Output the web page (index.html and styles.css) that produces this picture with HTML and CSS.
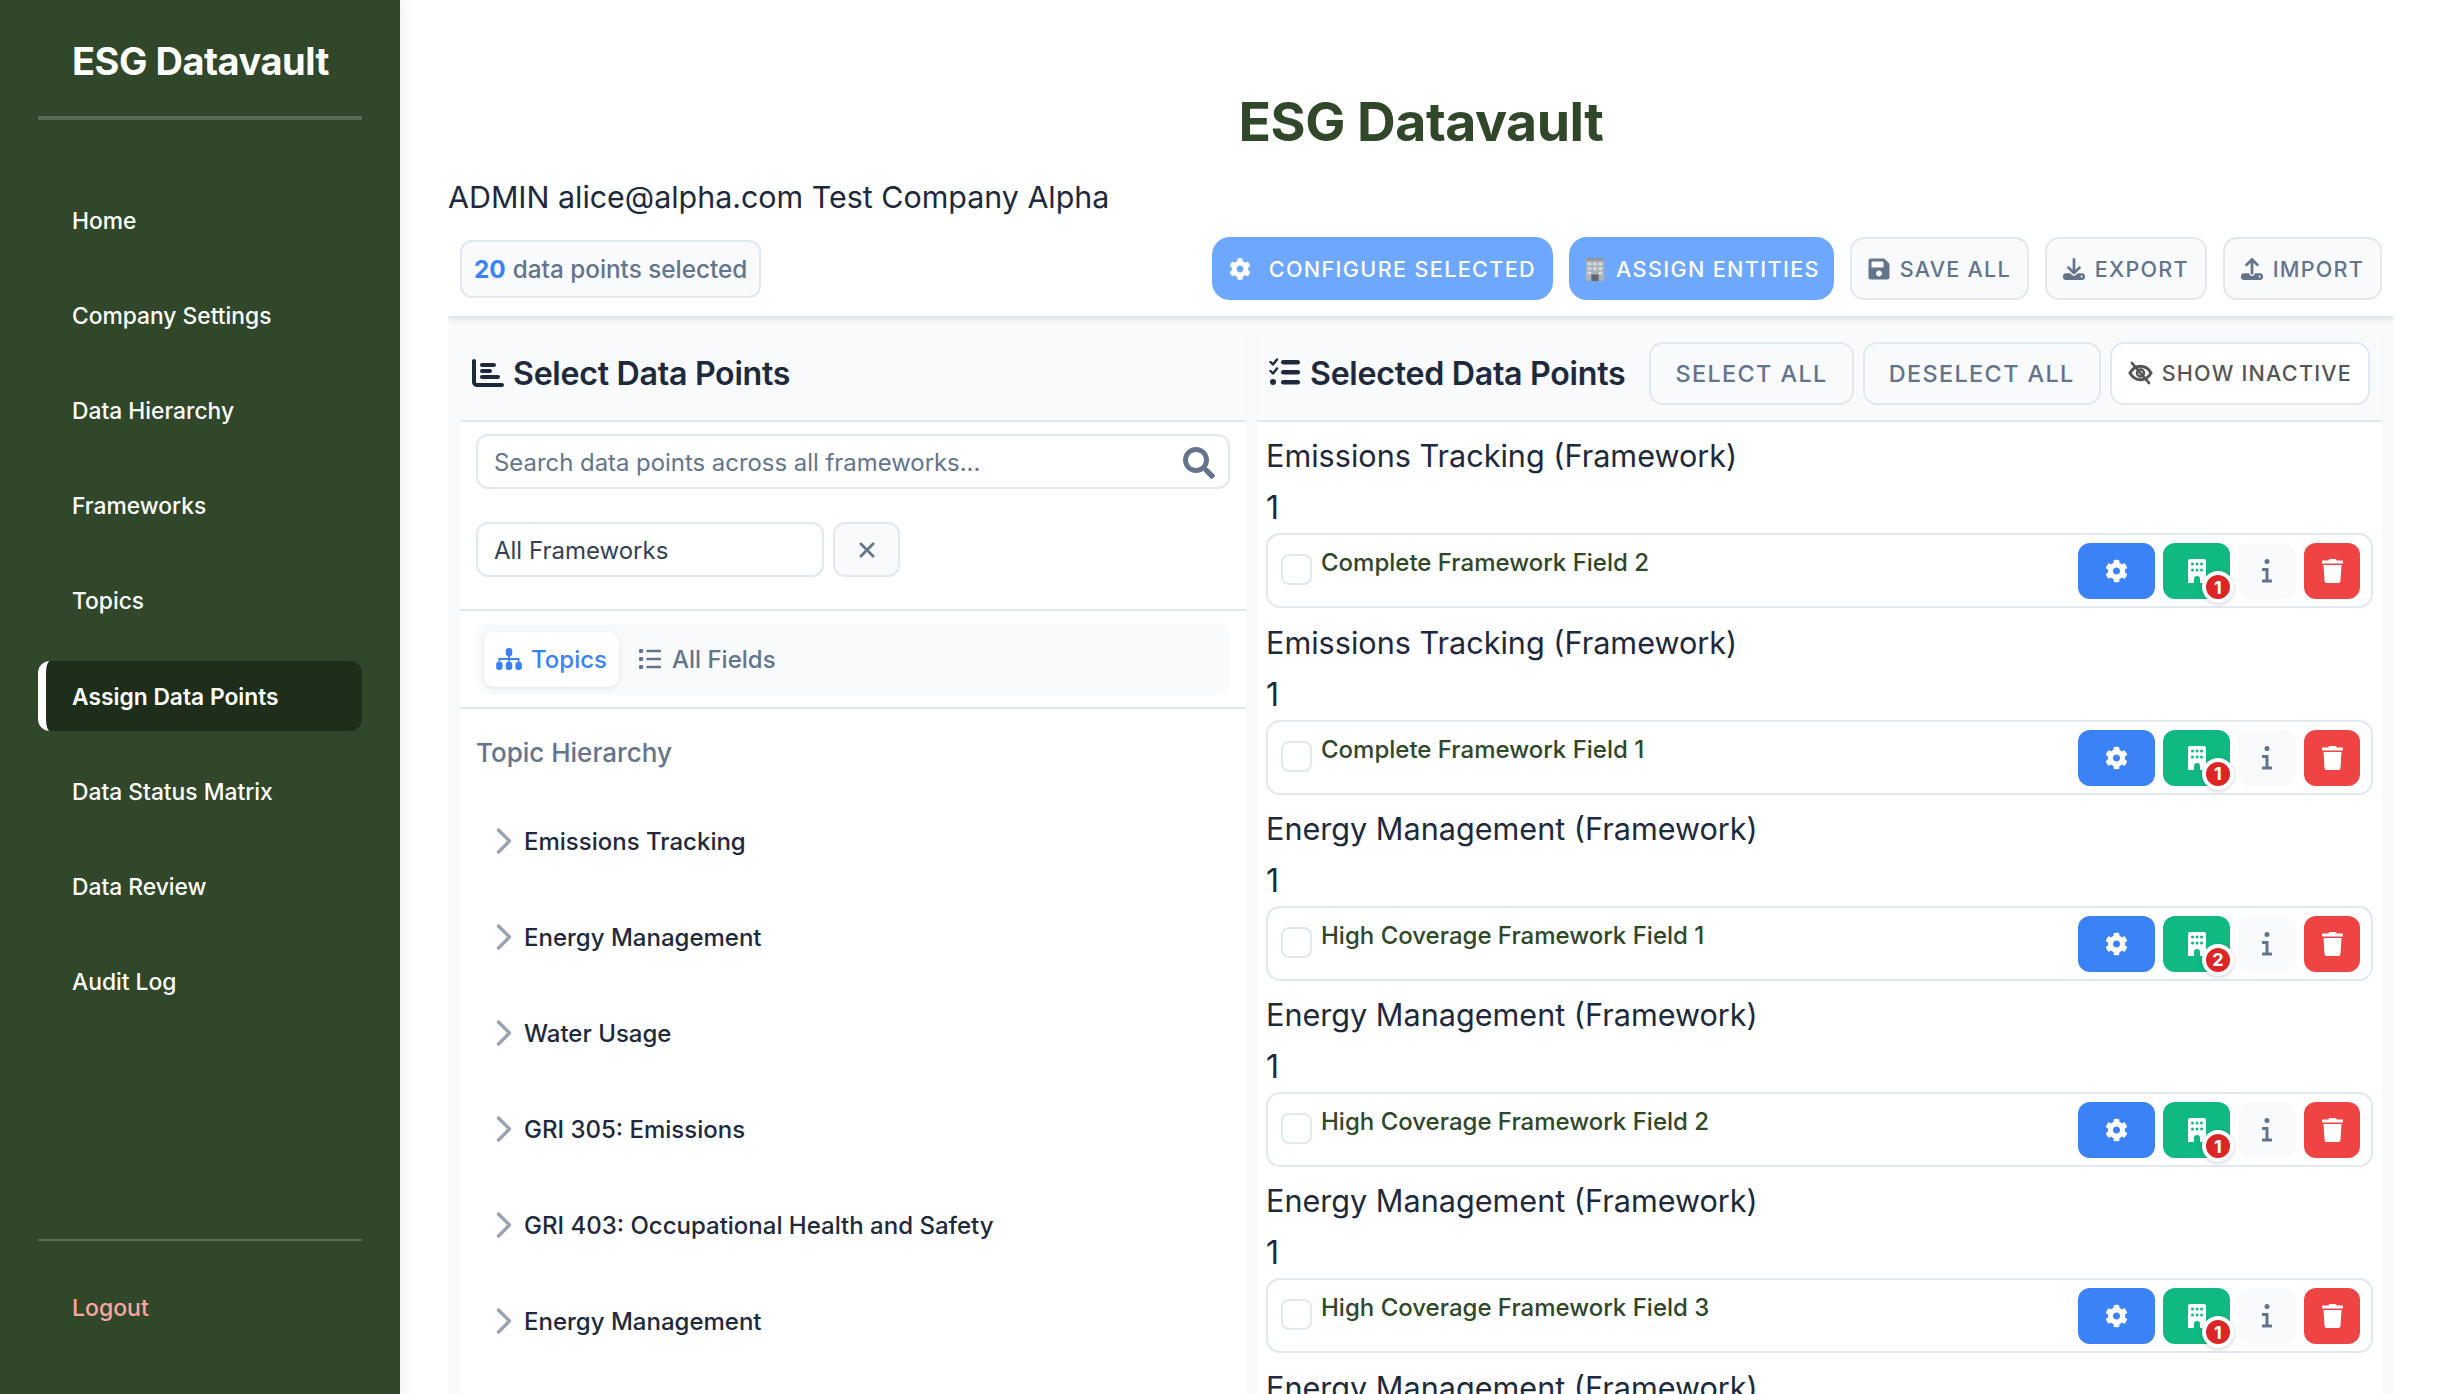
FILE: index.html
```html
<!DOCTYPE html>
<html>
<head>
    <title>ESG Datavault</title>
    <link rel="stylesheet" href="styles.css">
</head>
<body>
    <svg class="defs" width="0" height="0">
        <symbol id="i-cog" viewBox="0 0 512 512"><path d="M487.4 315.7l-42.6-24.6c4.3-23.2 4.3-47 0-70.2l42.6-24.6c4.9-2.8 7.1-8.6 5.5-14-11.1-35.6-30-67.8-54.7-94.6-3.8-4.1-10-5.1-14.8-2.3L380.8 110c-17.9-15.4-38.5-27.3-60.8-35.1V25.8c0-5.6-3.9-10.5-9.4-11.7-36.7-8.2-74.3-7.8-109.2 0-5.5 1.2-9.4 6.1-9.4 11.7V75c-22.2 7.9-42.8 19.8-60.8 35.1L88.7 85.5c-4.9-2.8-11-1.9-14.8 2.3-24.7 26.7-43.6 58.9-54.7 94.6-1.7 5.4.6 11.2 5.5 14L67.3 221c-4.3 23.2-4.3 47 0 70.2l-42.6 24.6c-4.9 2.8-7.1 8.6-5.5 14 11.1 35.6 30 67.8 54.7 94.6 3.8 4.1 10 5.1 14.8 2.3l42.6-24.6c17.9 15.4 38.5 27.3 60.8 35.1v49.2c0 5.6 3.9 10.5 9.4 11.7 36.7 8.2 74.3 7.8 109.2 0 5.5-1.2 9.4-6.1 9.4-11.7v-49.2c22.2-7.9 42.8-19.8 60.8-35.1l42.6 24.6c4.9 2.8 11 1.9 14.8-2.3 24.7-26.7 43.6-58.9 54.7-94.6 1.5-5.5-.7-11.3-5.6-14.1zM256 336c-44.1 0-80-35.9-80-80s35.9-80 80-80 80 35.9 80 80-35.9 80-80 80z"/></symbol>
        <symbol id="i-trash" viewBox="0 0 448 512"><path d="M432 32H312l-9.4-18.7A24 24 0 0 0 281.1 0H166.8a23.72 23.72 0 0 0-21.4 13.3L136 32H16A16 16 0 0 0 0 48v32a16 16 0 0 0 16 16h416a16 16 0 0 0 16-16V48a16 16 0 0 0-16-16zM53.2 467a48 48 0 0 0 47.9 45h245.8a48 48 0 0 0 47.9-45L416 128H32z"/></symbol>
        <symbol id="i-search" viewBox="0 0 512 512"><path d="M505 442.7L405.3 343c-4.5-4.5-10.6-7-17-7H372c27.6-35.3 44-79.7 44-128C416 93.1 322.9 0 208 0S0 93.1 0 208s93.1 208 208 208c48.3 0 92.7-16.4 128-44v16.3c0 6.4 2.5 12.5 7 17l99.7 99.7c9.4 9.4 24.6 9.4 33.9 0l28.3-28.3c9.4-9.4 9.4-24.6.1-34zM208 336c-70.7 0-128-57.2-128-128 0-70.7 57.2-128 128-128 70.7 0 128 57.2 128 128 0 70.7-57.2 128-128 128z"/></symbol>
        <symbol id="i-save" viewBox="0 0 448 512"><path d="M433.941 129.941l-83.882-83.882A48 48 0 0 0 316.118 32H48C21.49 32 0 53.49 0 80v352c0 26.51 21.49 48 48 48h352c26.51 0 48-21.49 48-48V163.882a48 48 0 0 0-14.059-33.941zM224 416c-35.346 0-64-28.654-64-64 0-35.346 28.654-64 64-64s64 28.654 64 64c0 35.346-28.654 64-64 64zm96-304.52V212c0 6.627-5.373 12-12 12H76c-6.627 0-12-5.373-12-12V108c0-6.627 5.373-12 12-12h228.52c3.183 0 6.235 1.264 8.485 3.515l3.48 3.48A11.996 11.996 0 0 1 320 111.48z"/></symbol>
        <symbol id="i-download" viewBox="0 0 512 512"><path d="M288 32c0-17.7-14.3-32-32-32s-32 14.3-32 32V274.7l-73.4-73.4c-12.5-12.5-32.8-12.5-45.3 0s-12.5 32.8 0 45.3l128 128c12.5 12.5 32.8 12.5 45.3 0l128-128c12.5-12.5 12.5-32.8 0-45.3s-32.8-12.5-45.3 0L288 274.7V32zM64 352c-35.3 0-64 28.7-64 64v32c0 35.3 28.7 64 64 64H448c35.3 0 64-28.7 64-64V416c0-35.3-28.7-64-64-64H346.5l-45.3 45.3c-25 25-65.5 25-90.5 0L165.5 352H64zm368 56a24 24 0 1 1 0 48 24 24 0 1 1 0-48z"/></symbol>
        <symbol id="i-upload" viewBox="0 0 512 512"><path d="M288 109.3V352c0 17.7-14.3 32-32 32s-32-14.3-32-32V109.3l-73.4 73.4c-12.5 12.5-32.8 12.5-45.3 0s-12.5-32.8 0-45.3l128-128c12.5-12.5 32.8-12.5 45.3 0l128 128c12.5 12.5 12.5 32.8 0 45.3s-32.8 12.5-45.3 0L288 109.3zM64 352H192c0 35.3 28.7 64 64 64s64-28.7 64-64H448c35.3 0 64 28.7 64 64v32c0 35.3-28.7 64-64 64H64c-35.3 0-64-28.7-64-64V416c0-35.3 28.7-64 64-64zM432 456a24 24 0 1 0 0-48 24 24 0 1 0 0 48z"/></symbol>
        <symbol id="i-chart" viewBox="0 0 512 512"><path d="M32 32c17.7 0 32 14.3 32 32V400c0 8.8 7.2 16 16 16H480c17.7 0 32 14.3 32 32s-14.3 32-32 32H80c-44.2 0-80-35.8-80-80V64C0 46.3 14.3 32 32 32zm96 96c0-17.7 14.3-32 32-32l192 0c17.7 0 32 14.3 32 32s-14.3 32-32 32l-192 0c-17.7 0-32-14.3-32-32zm32 64H288c17.7 0 32 14.3 32 32s-14.3 32-32 32H160c-17.7 0-32-14.3-32-32s14.3-32 32-32zm0 96H416c17.7 0 32 14.3 32 32s-14.3 32-32 32H160c-17.7 0-32-14.3-32-32s14.3-32 32-32z"/></symbol>
        <symbol id="i-checks" viewBox="0 0 32 32"><path d="M1.500 5l2.500 2.500L8 2.500M1.500 14l2.500 2.500L8 11.500" fill="none" stroke="currentColor" stroke-width="2.400" stroke-linecap="round" stroke-linejoin="round"/><circle cx="4" cy="25" r="3"/><rect x="12" y="3" width="19" height="4.600" rx="2.300"/><rect x="12" y="13" width="19" height="4.600" rx="2.300"/><rect x="12" y="23" width="19" height="4.600" rx="2.300"/></symbol>
        <symbol id="i-sitemap" viewBox="0 0 28 24"><rect x="10.500" y="0" width="7" height="9" rx="3"/><rect x="0" y="15" width="7" height="9" rx="3"/><rect x="10.500" y="15" width="7" height="9" rx="3"/><rect x="21" y="15" width="7" height="9" rx="3"/><path d="M3.500 15v-3h21v3M14 8v7" fill="none" stroke="currentColor" stroke-width="2"/></symbol>
        <symbol id="i-list" viewBox="0 0 24 24"><rect x="0" y="1" width="4.500" height="4.500" rx="1.200"/><rect x="0" y="9.700" width="4.500" height="4.500" rx="1.200"/><rect x="0" y="18.500" width="4.500" height="4.500" rx="1.200"/><rect x="8" y="2" width="16" height="2.600" rx="1"/><rect x="8" y="10.700" width="16" height="2.600" rx="1"/><rect x="8" y="19.400" width="16" height="2.600" rx="1"/></symbol>
        <symbol id="i-eye" viewBox="0 0 26 24"><path d="M2 12c2.600-4.500 6.400-7 11-7s8.400 2.500 11 7c-2.600 4.500-6.400 7-11 7s-8.400-2.500-11-7z" fill="none" stroke="currentColor" stroke-width="3"/><circle cx="13" cy="12" r="3.600" fill="none" stroke="currentColor" stroke-width="2.600"/><path d="M4 1.500l18 21" stroke="currentColor" stroke-width="2.600" stroke-linecap="round"/></symbol>
        <symbol id="i-chevron" viewBox="0 0 16 26"><path d="M2.500 2l11 11-11 11" fill="none" stroke="currentColor" stroke-width="3.400" stroke-linecap="round" stroke-linejoin="round"/></symbol>
        <symbol id="i-xmark" viewBox="0 0 16 16"><path d="M2.500 2.500l11 11M13.500 2.500l-11 11" fill="none" stroke="currentColor" stroke-width="2.400" stroke-linecap="round"/></symbol>
        <symbol id="i-building" viewBox="0 0 18 24"><path d="M2 0h14a2 2 0 0 1 2 2v22h-6v-4a3 3 0 0 0-6 0v4H0V2a2 2 0 0 1 2-2z"/><g fill="#10b981"><circle cx="4.500" cy="5" r="1.500"/><circle cx="9" cy="5" r="1.500"/><circle cx="13.500" cy="5" r="1.500"/><circle cx="4.500" cy="11" r="1.500"/><circle cx="9" cy="11" r="1.500"/><circle cx="13.500" cy="11" r="1.500"/></g></symbol>
        <symbol id="i-info" viewBox="0 0 10 24"><circle cx="5" cy="2.500" r="2.500"/><path d="M1 9h5.500v11.500H9a1.500 1.500 0 0 1 0 3H1a1.500 1.500 0 0 1 0-3h2.500V12H1a1.500 1.500 0 0 1 0-3z"/></symbol>
        <symbol id="i-office" viewBox="0 0 24 26"><rect x="2" y="1" width="20" height="25" fill="#a9b3b8"/><rect x="2" y="1" width="20" height="3" fill="#8d979c"/><g fill="#d5dde0"><rect x="4" y="6" width="4" height="3"/><rect x="10" y="6" width="4" height="3"/><rect x="16" y="6" width="4" height="3"/><rect x="4" y="11" width="4" height="3"/><rect x="10" y="11" width="4" height="3"/><rect x="16" y="11" width="4" height="3"/><rect x="4" y="16" width="4" height="3"/><rect x="16" y="16" width="4" height="3"/></g><rect x="8" y="19" width="8" height="7" fill="#5f686d"/></symbol>
    </svg>

    <aside class="sidebar">
        <div class="brand">ESG Datavault</div>
        <nav class="nav">
            <a class="nav-link">Home</a>
            <a class="nav-link">Company Settings</a>
            <a class="nav-link">Data Hierarchy</a>
            <a class="nav-link">Frameworks</a>
            <a class="nav-link">Topics</a>
            <a class="nav-link active">Assign Data Points</a>
            <a class="nav-link">Data Status Matrix</a>
            <a class="nav-link">Data Review</a>
            <a class="nav-link">Audit Log</a>
        </nav>
        <div class="logout-wrap">
            <a class="logout">Logout</a>
        </div>
    </aside>

    <main class="main">
        <h1 class="page-title">ESG Datavault</h1>
        <p class="user-line">ADMIN alice@alpha.com Test Company Alpha</p>

        <div class="toolbar">
            <div class="count-pill"><b>20</b> data points selected</div>
            <div class="toolbar-actions">
                <button class="btn btn-primary btn-config"><svg class="ico"><use href="#i-cog"/></svg><span class="gap-wide">Configure Selected</span></button>
                <button class="btn btn-primary btn-assign"><svg class="ico"><use href="#i-office"/></svg><span>Assign Entities</span></button>
                <button class="btn"><svg class="ico ico-save"><use href="#i-save"/></svg><span>Save All</span></button>
                <button class="btn"><svg class="ico"><use href="#i-download"/></svg><span>Export</span></button>
                <button class="btn"><svg class="ico"><use href="#i-upload"/></svg><span>Import</span></button>
            </div>
        </div>

        <div class="panels">
            <section class="panel panel-left">
                <header class="panel-head">
                    <h2 class="panel-title"><svg class="title-ico"><use href="#i-chart"/></svg>Select Data Points</h2>
                </header>
                <div class="filters">
                    <div class="search">
                        <span class="placeholder">Search data points across all frameworks...</span>
                        <svg class="search-ico"><use href="#i-search"/></svg>
                    </div>
                    <div class="filter-row">
                        <div class="select">All Frameworks</div>
                        <button class="clear-btn"><svg class="x-ico"><use href="#i-xmark"/></svg></button>
                    </div>
                </div>
                <div class="tabs-wrap">
                    <div class="tabs">
                        <div class="tab active"><svg class="tab-ico"><use href="#i-sitemap"/></svg>Topics</div>
                        <div class="tab"><svg class="tab-ico"><use href="#i-list"/></svg>All Fields</div>
                    </div>
                </div>
                <div class="tree">
                    <div class="tree-label">Topic Hierarchy</div>
                    <div class="tree-item"><svg class="chev"><use href="#i-chevron"/></svg>Emissions Tracking</div>
                    <div class="tree-item"><svg class="chev"><use href="#i-chevron"/></svg>Energy Management</div>
                    <div class="tree-item"><svg class="chev"><use href="#i-chevron"/></svg>Water Usage</div>
                    <div class="tree-item"><svg class="chev"><use href="#i-chevron"/></svg>GRI 305: Emissions</div>
                    <div class="tree-item"><svg class="chev"><use href="#i-chevron"/></svg>GRI 403: Occupational Health and Safety</div>
                    <div class="tree-item"><svg class="chev"><use href="#i-chevron"/></svg>Energy Management</div>
                </div>
            </section>

            <section class="panel panel-right">
                <header class="panel-head panel-head-right">
                    <h2 class="panel-title"><svg class="title-ico title-ico-checks"><use href="#i-checks"/></svg>Selected Data Points</h2>
                    <div class="head-actions">
                        <button class="btn btn-head">Select All</button>
                        <button class="btn btn-head">Deselect All</button>
                        <button class="btn btn-white"><svg class="ico ico-eye"><use href="#i-eye"/></svg><span>Show Inactive</span></button>
                    </div>
                </header>
                <div class="selected-list">
                    <h3 class="group-title">Emissions Tracking (Framework)</h3>
                    <div class="group-count">1</div>
                    <div class="field-row">
                        <span class="check"></span><span class="field-name">Complete Framework Field 2</span>
                        <div class="row-actions">
                            <button class="act act-cog"><svg><use href="#i-cog"/></svg></button>
                            <button class="act act-ent"><svg><use href="#i-building"/></svg><span class="badge">1</span></button>
                            <button class="act act-info"><svg><use href="#i-info"/></svg></button>
                            <button class="act act-del"><svg><use href="#i-trash"/></svg></button>
                        </div>
                    </div>
                    <h3 class="group-title">Emissions Tracking (Framework)</h3>
                    <div class="group-count">1</div>
                    <div class="field-row">
                        <span class="check"></span><span class="field-name">Complete Framework Field 1</span>
                        <div class="row-actions">
                            <button class="act act-cog"><svg><use href="#i-cog"/></svg></button>
                            <button class="act act-ent"><svg><use href="#i-building"/></svg><span class="badge">1</span></button>
                            <button class="act act-info"><svg><use href="#i-info"/></svg></button>
                            <button class="act act-del"><svg><use href="#i-trash"/></svg></button>
                        </div>
                    </div>
                    <h3 class="group-title">Energy Management (Framework)</h3>
                    <div class="group-count">1</div>
                    <div class="field-row">
                        <span class="check"></span><span class="field-name">High Coverage Framework Field 1</span>
                        <div class="row-actions">
                            <button class="act act-cog"><svg><use href="#i-cog"/></svg></button>
                            <button class="act act-ent"><svg><use href="#i-building"/></svg><span class="badge">2</span></button>
                            <button class="act act-info"><svg><use href="#i-info"/></svg></button>
                            <button class="act act-del"><svg><use href="#i-trash"/></svg></button>
                        </div>
                    </div>
                    <h3 class="group-title">Energy Management (Framework)</h3>
                    <div class="group-count">1</div>
                    <div class="field-row">
                        <span class="check"></span><span class="field-name">High Coverage Framework Field 2</span>
                        <div class="row-actions">
                            <button class="act act-cog"><svg><use href="#i-cog"/></svg></button>
                            <button class="act act-ent"><svg><use href="#i-building"/></svg><span class="badge">1</span></button>
                            <button class="act act-info"><svg><use href="#i-info"/></svg></button>
                            <button class="act act-del"><svg><use href="#i-trash"/></svg></button>
                        </div>
                    </div>
                    <h3 class="group-title">Energy Management (Framework)</h3>
                    <div class="group-count">1</div>
                    <div class="field-row">
                        <span class="check"></span><span class="field-name">High Coverage Framework Field 3</span>
                        <div class="row-actions">
                            <button class="act act-cog"><svg><use href="#i-cog"/></svg></button>
                            <button class="act act-ent"><svg><use href="#i-building"/></svg><span class="badge">1</span></button>
                            <button class="act act-info"><svg><use href="#i-info"/></svg></button>
                            <button class="act act-del"><svg><use href="#i-trash"/></svg></button>
                        </div>
                    </div>
                    <h3 class="group-title">Energy Management (Framework)</h3>
                </div>
            </section>
        </div>
    </main>
</body>
</html>
```

FILE: styles.css
```css
* {
    margin: 0;
    padding: 0;
    box-sizing: border-box;
}

html, body {
    height: 100%;
    overflow: hidden;
}

body {
    display: flex;
    background: #fff;
    color: #1e293b;
    font-family: Inter, "Liberation Sans", sans-serif;
}

.defs {
    position: absolute;
}

svg {
    fill: currentColor;
}

/* sidebar */
.sidebar {
    width: 400px;
    height: 1394px;
    flex-shrink: 0;
    display: flex;
    flex-direction: column;
    padding: 0 38px;
    background: #30472a;
    color: #fff;
    box-shadow: 4px 0 12px rgba(0,0,0,0.06);
}

.brand {
    height: 120px;
    padding: 36px 0 0 34px;
    border-bottom: 4px solid rgba(255,255,255,0.2);
    font-size: 38px;
    line-height: 50px;
    font-weight: 700;
    letter-spacing: -0.5px;
}

.nav {
    display: flex;
    flex-direction: column;
    gap: 25px;
    margin-top: 65px;
}

.nav-link {
    height: 70.2px;
    display: flex;
    align-items: center;
    padding-left: 34px;
    border-radius: 12px;
    font-size: 22.8px;
    font-weight: 500;
}

.nav-link.active {
    padding-left: 26px;
    border-left: 8px solid #fff;
    background: #1e2e1a;
    font-weight: 600;
}

.logout-wrap {
    margin-top: auto;
    height: 155px;
    border-top: 2px solid rgba(255,255,255,0.2);
    padding: 52px 0 0 34px;
}

.logout {
    font-size: 23px;
    line-height: 30px;
    font-weight: 500;
    color: #fca5a5;
}

/* main */
.main {
    flex: 1;
    min-width: 0;
    padding: 0 48px;
}

.page-title {
    padding-top: 88px;
    font-size: 53.6px;
    line-height: 68px;
    font-weight: 700;
    letter-spacing: -0.5px;
    text-align: center;
    color: #30472a;
}

.user-line {
    margin-top: 20px;
    font-size: 30.4px;
    line-height: 42px;
}

.toolbar {
    position: relative;
    z-index: 1;
    display: flex;
    align-items: center;
    justify-content: space-between;
    margin-top: 19px;
    padding: 0 12px 16px;
    background: #fff;
    box-shadow: 0 3px 6px rgba(30,41,59,0.13);
    clip-path: inset(0 0 -12px 0);
}

.count-pill {
    height: 58px;
    display: flex;
    align-items: center;
    gap: 7px;
    padding: 0 12px;
    background: #f8fafc;
    border: 2px solid #e2e8f0;
    border-radius: 12px;
    font-size: 24.3px;
    font-weight: 500;
    color: #64748b;
}

.count-pill b {
    font-weight: 700;
    color: #3b82f6;
}

.toolbar-actions {
    display: flex;
    gap: 16px;
}

.btn {
    height: 63px;
    display: flex;
    align-items: center;
    gap: 10px;
    padding: 0 16px;
    background: #f8fafc;
    border: 2px solid #e2e8f0;
    border-radius: 14px;
    color: #64748b;
    font-family: inherit;
    font-size: 21.6px;
    font-weight: 500;
    letter-spacing: 1.2px;
    text-transform: uppercase;
}

.btn-primary {
    background: #6ea8fe;
    border: none;
    border-radius: 18px;
    color: #fff;
    letter-spacing: 1.35px;
}

.btn-config {
    padding: 0 17px;
}

.btn-assign {
    padding: 0 14px 0 15px;
}

.gap-wide {
    margin-left: 8px;
}

.ico {
    width: 22px;
    height: 24px;
    flex-shrink: 0;
}

.ico-eye {
    width: 25px;
    height: 26px;
    margin-right: -1px;
}

/* panels */
.panels {
    display: grid;
    grid-template-columns: 786px 1fr;
    gap: 11px;
    padding: 9px 12px 0;
    height: 1200px;
    background: #f8fafc;
}

.panel {
    background: #fff;
    border-radius: 14px 14px 0 0;
    overflow: hidden;
    box-shadow: 0 1px 3px rgba(0,0,0,0.04);
}

.panel-head {
    height: 97px;
    display: flex;
    align-items: center;
    padding: 1px 12px 0;
    background: #f8fafc;
    border-bottom: 2px solid #e2e8f0;
}

.panel-head-right {
    justify-content: space-between;
}

.panel-title {
    display: flex;
    align-items: center;
    font-size: 32.2px;
    font-weight: 600;
    letter-spacing: -0.3px;
    color: #1e293b;
}

.title-ico {
    width: 32px;
    height: 32px;
    margin-right: 9px;
}

.title-ico-checks {
    margin-right: 9px;
}

.filters {
    padding: 12px 16px 0;
    height: 189px;
    border-bottom: 2px solid #e2e8f0;
}

.search {
    height: 55px;
    display: flex;
    align-items: center;
    justify-content: space-between;
    padding: 2px 13px 0 16px;
    border: 2px solid #e2e8f0;
    border-radius: 12px;
}

.placeholder {
    font-size: 23.9px;
    color: #64748b;
}

.search-ico {
    width: 32px;
    height: 32px;
    color: #64748b;
}

.filter-row {
    display: flex;
    gap: 9px;
    margin-top: 33px;
}

.select {
    width: 348px;
    height: 55px;
    display: flex;
    align-items: center;
    padding: 1px 16px 0;
    border: 2px solid #e2e8f0;
    border-radius: 12px;
    font-size: 24px;
    color: #334155;
}

.clear-btn {
    width: 67px;
    height: 55px;
    display: flex;
    align-items: center;
    justify-content: center;
    background: #f8fafc;
    border: 2px solid #e2e8f0;
    border-radius: 12px;
    color: #64748b;
}

.x-ico {
    width: 18px;
    height: 18px;
}

.tabs-wrap {
    height: 98px;
    padding: 12px 16px 0;
    border-bottom: 2px solid #e2e8f0;
}

.tabs {
    height: 72px;
    display: flex;
    align-items: center;
    gap: 6px;
    padding: 0 8px;
    background: #f8fafc;
    border-radius: 14px;
}

.tab {
    height: 55px;
    display: flex;
    align-items: center;
    gap: 9px;
    padding: 0 12px;
    border-radius: 10px;
    font-size: 24px;
    font-weight: 500;
    color: #64748b;
}

.tab.active {
    background: #fff;
    color: #3b82f6;
    box-shadow: 0 1px 4px rgba(0,0,0,0.1);
}

.tab-ico {
    width: 26px;
    height: 22px;
}

.tree {
    padding: 28px 16px 0;
}

.tree-label {
    font-size: 26px;
    line-height: 32px;
    font-weight: 500;
    color: #64748b;
    margin-bottom: 24px;
}

.tree-item {
    height: 96px;
    display: flex;
    align-items: center;
    padding-left: 20px;
    font-size: 24px;
    font-weight: 500;
    color: #1e293b;
}

.chev {
    width: 16px;
    height: 26px;
    margin-right: 12px;
    color: #9ca3af;
}

.head-actions {
    display: flex;
    gap: 9px;
}

.btn-head {
    padding: 0 24px;
    font-size: 23.4px;
    letter-spacing: 1.4px;
}

.btn-white {
    padding: 0 16px;
    background: #fff;
    color: #555;
}

.selected-list {
    padding: 0 9px;
}

.group-title {
    padding-top: 12.3px;
    font-size: 30.6px;
    line-height: 44px;
    font-weight: 400;
    color: #1e293b;
}

.group-count {
    margin-top: 9px;
    font-size: 32px;
    line-height: 42px;
    color: #1e293b;
}

.field-row {
    position: relative;
    height: 75px;
    display: flex;
    align-items: flex-start;
    margin-top: 4px;
    padding: 19px 0 0 13px;
    border: 2px solid #e2e8f0;
    border-radius: 14px;
    background: #fff;
}

.check {
    width: 31px;
    height: 31px;
    margin-right: 9px;
    border: 2px solid #e2e8f0;
    border-radius: 8px;
    flex-shrink: 0;
}

.field-name {
    margin-top: -1px;
    font-size: 24px;
    line-height: 20px;
    font-weight: 500;
    color: #30472a;
}

.row-actions {
    margin-left: auto;
    margin-top: -11px;
    margin-right: 11px;
    display: flex;
    gap: 8px;
}

.act {
    position: relative;
    height: 56px;
    display: flex;
    align-items: center;
    justify-content: center;
    border: none;
    border-radius: 12px;
    color: #fff;
}

.act svg {
    width: 23px;
    height: 24px;
}

.act-cog {
    width: 77px;
    background: #3b82f6;
}

.act-ent {
    width: 67px;
    background: #10b981;
}

.act-ent svg {
    width: 18px;
}

.act-info {
    width: 58px;
    background: #f8fafc;
    color: #64748b;
}

.act-info svg {
    width: 10px;
}

.act-del {
    width: 56px;
    background: #ef4444;
}

.badge {
    position: absolute;
    top: 28px;
    left: 39px;
    width: 32px;
    height: 32px;
    display: flex;
    align-items: center;
    justify-content: center;
    background: #dc2626;
    border: 4px solid #fff;
    border-radius: 50%;
    box-shadow: 0 1px 4px rgba(0,0,0,0.2);
    font-family: Inter, sans-serif;
    font-size: 18px;
    font-weight: 700;
    color: #fff;
}
```
